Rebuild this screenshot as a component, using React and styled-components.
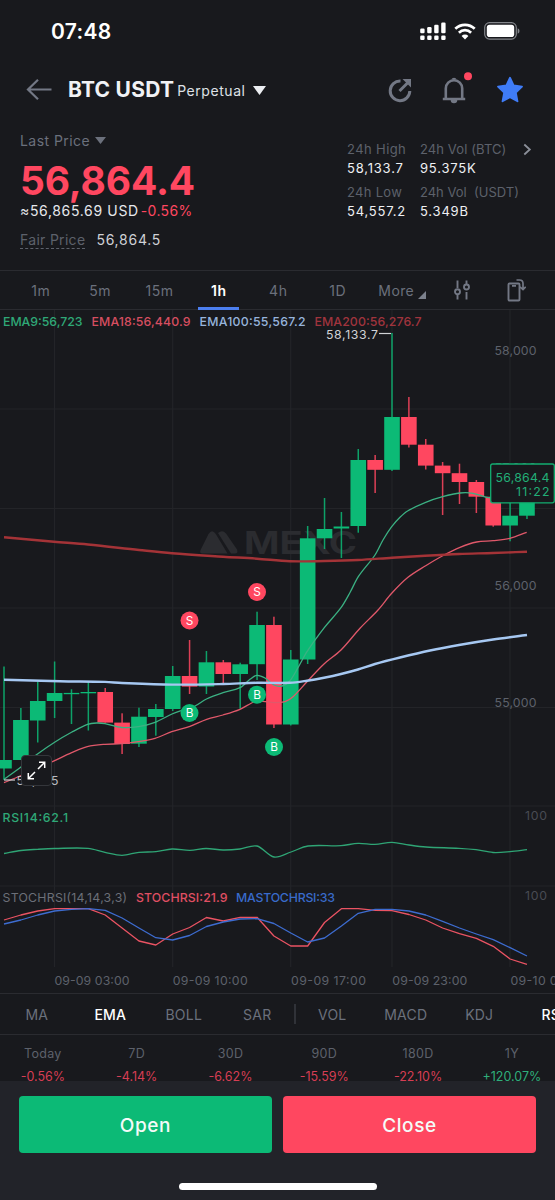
import React from "react";
import styled, { createGlobalStyle } from "styled-components";

const c = {
  bg: "#18191d",
  footer: "#222329",
  line: "#2a2b30",
  grid: "#232428",
  dim: "#5d616b",
  mid: "#6b707c",
  text: "#e6e8ec",
  green: "#0cba76",
  red: "#ff4760",
  softGreen: "#2fae7b",
  softRed: "#dd5062",
  blue: "#3f7cf7",
};

const GlobalStyle = createGlobalStyle`
  * { box-sizing: border-box; }
  body { margin: 0; background: ${c.bg}; overflow: hidden; }
`;

const Screen = styled.main`
  width: 555px;
  height: 1200px;
  display: flex;
  flex-direction: column;
  overflow: hidden;
  background: ${c.bg};
  color: ${c.text};
  font-family: Inter, "Liberation Sans", sans-serif;
  white-space: nowrap;
  svg { display: block; flex: none; }
`;

const StatusBar = styled.div`
  height: 62px;
  flex: none;
  padding: 0 35px 0 51px;
  display: flex;
  align-items: center;
  justify-content: space-between;
`;

const Clock = styled.span`
  font-size: 21px;
  font-weight: 600;
  letter-spacing: 0.3px;
  color: #fff;
`;

const StatusIcons = styled.div`
  display: flex;
  align-items: center;
  gap: 8px;
`;

const Header = styled.header`
  height: 56px;
  flex: none;
  padding: 0 31px 0 26px;
  display: flex;
  align-items: center;
`;

const Pair = styled.h1`
  margin: 0 3px 0 16px;
  font-size: 21px;
  line-height: 26px;
  font-weight: 700;
  letter-spacing: 0.25px;
  color: #f1f2f5;
`;

const Kind = styled.span`
  font-size: 14px;
  letter-spacing: 0.55px;
  color: #dfe1e6;
  margin-right: 7px;
`;

const HeaderActions = styled.div`
  margin-left: auto;
  display: flex;
  align-items: center;
  gap: 28px;
`;

const Summary = styled.section`
  height: 152px;
  flex: none;
  padding: 12px 0 0 20px;
  display: flex;
`;

const PriceBlock = styled.div`
  width: 327px;
`;

const PriceLabel = styled.div`
  display: flex;
  align-items: center;
  gap: 5px;
  height: 20px;
  font-size: 14px;
  letter-spacing: 0.45px;
  color: ${c.mid};
`;

const BigPrice = styled.div`
  height: 40px;
  margin-top: 11px;
  line-height: 40px;
  font-size: 39px;
  font-weight: 700;
  letter-spacing: -0.15px;
  color: ${c.red};
`;

const Converted = styled.div`
  height: 20px;
  line-height: 20px;
  font-size: 14px;
  letter-spacing: 0.65px;
  span { color: ${c.red}; margin-left: 2px; letter-spacing: 0.35px; }
`;

const Fair = styled.div`
  margin-top: 10px;
  display: flex;
  gap: 11px;
  line-height: 17px;
  font-size: 14px;
  letter-spacing: 0.75px;
  color: #cfd1d6;
`;

const FairLabel = styled.span`
  color: ${c.dim};
  letter-spacing: 0.3px;
  border-bottom: 1px dashed ${c.dim};
`;

const Stats = styled.div`
  display: grid;
  grid-template-columns: 73px 99px 14px;
  grid-template-rows: 43px 43px;
  padding-top: 10px;
`;

const Stat = styled.div`
  font-size: 13px;
  letter-spacing: ${(p) => p.$ls}px;
  line-height: 19px;
  color: ${c.dim};
  white-space: pre;
  strong { display: block; font-weight: 400; letter-spacing: 0.8px; color: #eef0f3; }
`;

const ChevronCell = styled.div`
  padding: 3px 0 0 4px;
`;

const Tabs = styled.nav`
  height: 40px;
  flex: none;
  border-top: 1px solid ${c.line};
  border-bottom: 1px solid ${c.line};
  padding-left: 10.5px;
  display: flex;
  align-items: stretch;
`;

const Tab = styled.div`
  width: 59.4px;
  display: flex;
  align-items: center;
  justify-content: center;
  position: relative;
  padding: 1px 0 0 1px;
  font-size: 14px;
  letter-spacing: 0.5px;
  font-weight: ${(p) => (p.$active ? 600 : 400)};
  color: ${(p) => (p.$active ? "#fff" : c.mid)};
  &::after {
    content: "";
    display: ${(p) => (p.$active ? "block" : "none")};
    position: absolute;
    left: 9px;
    right: 9px;
    bottom: -1px;
    height: 3px;
    background: #4c7ff0;
  }
`;

const MoreTab = styled.div`
  display: flex;
  align-items: center;
  gap: 4px;
  margin-left: 11.5px;
  padding-top: 1px;
  width: 75.5px;
  font-size: 14px;
  letter-spacing: 0.4px;
  color: ${c.mid};
  svg { margin-top: 9px; }
`;

const ToolButton = styled.div`
  width: ${(p) => p.$w}px;
  display: flex;
  align-items: center;
`;

const ChartArea = styled.section`
  position: relative;
  height: 683px;
  flex: none;
`;

const ExpandButton = styled.div`
  position: absolute;
  left: 20.5px;
  top: 445px;
  width: 31px;
  height: 31px;
  border: 1px solid #34363b;
  border-radius: 4px;
  background: ${c.bg};
  display: flex;
  align-items: center;
  justify-content: center;
`;

const Indicators = styled.nav`
  height: 42px;
  flex: none;
  border-top: 1px solid ${c.line};
  border-bottom: 1px solid ${c.line};
  display: flex;
  align-items: center;
`;

const Indicator = styled.div`
  width: 73.5px;
  flex: none;
  text-align: center;
  font-size: 14px;
  letter-spacing: 0.2px;
  font-weight: ${(p) => (p.$active ? 500 : 400)};
  color: ${(p) => (p.$active ? "#fff" : c.mid)};
`;

const Divider = styled.div`
  width: 1.5px;
  height: 20px;
  flex: none;
  background: #303238;
`;

const Performance = styled.section`
  height: 46px;
  flex: none;
  overflow: hidden;
  margin-left: -4px;
  display: grid;
  grid-template-columns: repeat(6, 93.8px);
  padding-top: 7px;
`;

const Period = styled.div`
  text-align: center;
  font-size: 12.5px;
  line-height: 23.4px;
  letter-spacing: 0.3px;
  color: ${c.dim};
  div { letter-spacing: 0; color: ${(p) => (p.$up ? c.softGreen : "#d63e54")}; }
`;

const Footer = styled.footer`
  flex: 1;
  background: ${c.footer};
  padding: 15px 19px 0;
  display: flex;
  flex-direction: column;
  align-items: center;
`;

const Actions = styled.div`
  width: 100%;
  display: flex;
  gap: 11px;
`;

const Action = styled.button`
  flex: 1;
  height: 57px;
  border: 0;
  border-radius: 4px;
  padding: 2px 0 0;
  font-family: inherit;
  font-size: 19px;
  font-weight: 500;
  letter-spacing: 0.6px;
  color: #f4fbf8;
  background: ${(p) => p.$bg};
`;

const HomeBar = styled.div`
  width: 198px;
  height: 7px;
  margin-top: 30px;
  border-radius: 4px;
  background: #fff;
`;

const chartTop = 310;
const step = 16.87;
const cx = (i) => 4 + step * i;

// [wick top, body top, body bottom, wick bottom, rising]
const candles = [
  [666.5, 760, 768.5, 780, 1], [708, 720, 760, 760, 1], [681.5, 701, 720.5, 742.5, 1],
  [661.5, 693, 701, 718, 1], [689.3, 692.9, 694.2, 724, 1], [681.5, 692, 693.3, 730.5, 1],
  [688, 692, 722.6, 722.6, 0], [713.3, 722.6, 744, 754, 0], [707.7, 716.7, 743.7, 747, 1],
  [704, 709, 717, 735.7, 1], [666, 676, 709, 711, 1], [640, 676, 686.6, 694, 0],
  [651, 662.3, 686.5, 694, 1], [660, 662.3, 674, 683.5, 0], [662.7, 664.3, 674, 708.7, 1],
  [611.7, 625, 664.2, 680, 1], [616.7, 625, 724.5, 728, 0], [650, 659.5, 724.5, 725.5, 1],
  [526, 538.3, 659.5, 664, 1], [498, 529, 538.3, 549, 1], [512, 526.5, 528.5, 558, 1],
  [449, 460, 526, 532.7, 1], [455, 460, 469.8, 493, 0], [333, 417, 469.8, 471, 1],
  [397, 417, 444.7, 447.5, 0], [439, 444.7, 465.6, 469.5, 0], [462, 465.6, 473.2, 515, 0],
  [463.7, 473.2, 482, 504, 0], [480, 482, 496.7, 513, 0], [496.7, 496.7, 525.5, 526.7, 0],
  [500, 515.7, 525.5, 541.3, 1], [480, 490, 515.7, 519, 1],
];

const ema9 = [[4, 779.3], [20, 767.7], [37.5, 754], [55, 742], [71.5, 732.3], [87.5, 724.3], [97, 723], [105, 723.7], [121.7, 727.5], [138.5, 726.7], [155, 722.3], [172, 714], [183, 710], [195, 706], [206.5, 699], [223, 692.7], [240, 687.7], [250, 679.3], [257, 675.3], [265, 678], [274, 685], [282, 686], [290, 680.7], [298, 667.7], [307, 651.7], [324.3, 627.7], [341, 607.7], [350, 592.5], [358.3, 576.7], [375, 555], [383, 540], [391.7, 526.7], [400, 517.3], [408, 510.7], [425.7, 502.3], [442.7, 496.7], [460, 493], [473, 493.3], [486.7, 497.3], [500, 499]];
const ema18 = [[4, 782.7], [20, 776], [53, 761.3], [71.7, 752.7], [87.3, 746.7], [105, 744.3], [121.7, 743.7], [138, 741.7], [155, 738.3], [171.7, 731.7], [190, 726.3], [206.7, 719.3], [223, 715], [240, 709.3], [255, 701.5], [263, 701.3], [274, 702.7], [285, 701.7], [293, 696.7], [307, 681.7], [324, 664], [341, 650], [360, 628.3], [378, 610], [391.7, 593.3], [408, 577.3], [425.7, 565.7], [442.7, 555.7], [460, 547.3], [476.7, 542], [493, 540.7], [510, 538.3], [526.7, 532.3]];
const ema100 = [[4, 679.7], [60, 681.2], [105, 681.9], [122, 683], [172, 684.6], [223, 684], [257, 682.8], [290, 682.8], [307, 680.7], [324, 677.7], [341, 674], [358, 669.5], [375, 664], [400, 657.5], [430, 650.5], [459, 645], [493, 639.5], [527, 635]];
const ema200 = [[4, 537.3], [54, 541.7], [88, 544.5], [139, 550], [172, 553.3], [223, 556.7], [257, 558.7], [290, 561.3], [324, 561], [358, 560], [392, 557.7], [425, 555.7], [459, 554], [493, 553], [527, 551.7]];
const rsi = [[4, 853.5], [21, 850.5], [37.6, 849.3], [54.5, 848.5], [88, 848.3], [105, 852.3], [122, 855.3], [139, 852.3], [156, 851.7], [172, 849], [190, 850.3], [206, 848.5], [223, 850], [240, 849], [257, 846], [274, 857], [291, 852], [308, 846], [341, 845.7], [358, 843.3], [375, 844.3], [392, 842.3], [409, 845], [426, 847], [459, 848.3], [476, 849.7], [493, 852.5], [510, 851.7], [527, 849.7]];
const stochY = [920, 915, 911, 908.7, 908.7, 908.7, 915, 928, 941, 945, 934, 927.5, 917.5, 921, 917.3, 917.3, 936, 946, 946, 922.5, 908.7, 908.7, 910.3, 910.7, 914.5, 920, 928, 933.7, 938.3, 946.3, 959, 964.3];
const maStochY = [924, 920, 915, 911, 909.3, 908.7, 910.3, 918, 928, 937.7, 940, 935.5, 926.5, 922, 919, 918.7, 923.5, 933, 942, 938, 926, 913.3, 909.3, 909.3, 911, 915, 921.3, 928, 934, 939.7, 947.7, 956];
const toPoints = (ys) => ys.map((y, i) => [cx(i), y]);

const straight = (pts) => "M" + pts.map((p) => p.join(" ")).join("L");

function smooth(pts) {
  let d = `M${pts[0][0]} ${pts[0][1]}`;
  for (let i = 0; i < pts.length - 1; i++) {
    const p0 = pts[i - 1] || pts[i];
    const p1 = pts[i];
    const p2 = pts[i + 1];
    const p3 = pts[i + 2] || p2;
    const w = p2[0] - p1[0];
    const m1 = (p2[1] - p0[1]) / (p2[0] - p0[0]);
    const m2 = (p3[1] - p1[1]) / (p3[0] - p1[0]);
    d += `C${p1[0] + w / 3} ${p1[1] + (m1 * w) / 3} ${p2[0] - w / 3} ${p2[1] - (m2 * w) / 3} ${p2[0]} ${p2[1]}`;
  }
  return d;
}

const gridX = [54.5, 172.7, 290.7, 392, 510];
const gridY = [409, 508.5, 608, 707.5, 806, 886];

const ChartLabel = ({ x, y, w, fill = c.dim, size = 12.3, children, ...rest }) => (
  <text x={x} y={y} textLength={w} fill={fill} fontSize={size} {...rest}>{children}</text>
);

const Marker = ({ x, y, side }) => (
  <g>
    <circle cx={x} cy={y} r="9" fill={side === "S" ? c.red : c.green} />
    <text x={x} y={y + 4.2} textAnchor="middle" fontSize="11.8" fill="#fff">{side}</text>
  </g>
);

const PriceChart = () => (
  <svg width="555" height="683" viewBox={`0 ${chartTop} 555 683`}>
    <g stroke={c.grid} strokeWidth="1.2">
      {gridX.map((x) => <path key={x} d={`M${x} 310V967`} />)}
      {gridY.map((y) => <path key={y} d={`M0 ${y}H555`} />)}
    </g>
    <g fill="#2b2c30">
      <path d="M202 553.5Q199 553 200.800 549.500L208.500 534Q212 528.500 215.800 534L227.500 553.500Z" />
      <path d="M218 533Q222.500 529.300 226 533.500L237 549.500Q238.500 553.300 235 553.500H231Z" />
      <text x="244" y="553.500" fontSize="31" fontWeight="700" textLength="113" lengthAdjust="spacingAndGlyphs">MEXC</text>
    </g>
    {[["58,000", 354.6], ["57,000", 472], ["56,000", 589.5], ["55,000", 707]].map(([t, y]) => (
      <ChartLabel key={t} x={494.5} y={y} w={42}>{t}</ChartLabel>
    ))}
    <g>
      {candles.map(([wt, t, b, wb, up], i) => (
        <g key={i} fill={up ? c.green : c.red}>
          <rect x={cx(i) - 0.75} y={wt} width="1.5" height={wb - wt} fillOpacity="0.85" />
          <rect x={cx(i) - 7.8} y={t} width="15.6" height={b - t} />
        </g>
      ))}
    </g>
    <g fill="none" strokeLinejoin="round">
      <path d={smooth(ema9)} stroke="#3bb183" strokeWidth="1.3" />
      <path d={smooth(ema18)} stroke="#e0586a" strokeWidth="1.3" />
      <path d={smooth(ema100)} stroke="#a6c8f2" strokeWidth="2.4" />
      <path d={smooth(ema200)} stroke="#a43337" strokeWidth="2.4" />
      <path d={smooth(rsi)} stroke="#2fa575" strokeWidth="1.3" />
      <path d={straight(toPoints(stochY))} stroke="#ea5363" strokeWidth="1.3" />
      <path d={straight(toPoints(maStochY))} stroke="#3d6cd0" strokeWidth="1.3" />
    </g>
    <Marker x={189.5} y={620.5} side="S" />
    <Marker x={257} y={592} side="S" />
    <Marker x={189.5} y={713} side="B" />
    <Marker x={257} y={694.7} side="B" />
    <Marker x={274} y={747} side="B" />

    <g fontWeight="500">
      <ChartLabel x={3} y={325.5} w={79.5} fill="#2fa877">EMA9:56,723</ChartLabel>
      <ChartLabel x={91.5} y={325.5} w={99} fill="#d64e60">EMA18:56,440.9</ChartLabel>
      <ChartLabel x={199.5} y={325.5} w={106} fill="#96b4dc">EMA100:55,567.2</ChartLabel>
      <ChartLabel x={314.5} y={325.5} w={107} fill="#a0343d">EMA200:56,276.7</ChartLabel>
      <ChartLabel x={2.5} y={821.8} w={65.5} fill="#2fa877">RSI14:62.1</ChartLabel>
      <ChartLabel x={136} y={902} w={91.5} fill="#e04f63">STOCHRSI:21.9</ChartLabel>
      <ChartLabel x={236} y={902} w={99} fill="#396bcb">MASTOCHRSI:33</ChartLabel>
    </g>
    <ChartLabel x={326} y={338.8} w={52} fill="#d0d2d6">58,133.7</ChartLabel>
    <path d="M379 333.500H391" stroke="#d0d2d6" strokeWidth="1.2" />
    <path d="M4 780H15" stroke="#d0d2d6" strokeWidth="1.2" />
    <ChartLabel x={16.5} y={785} w={42} fill="#b9bbc0">54,555</ChartLabel>

    <rect x="490.700" y="464" width="63.600" height="38.800" rx="2" fill={c.bg} stroke="#12ad70" strokeWidth="1.3" />
    <ChartLabel x={495.5} y={481.5} w={54} fill="#22ae77">56,864.4</ChartLabel>
    <ChartLabel x={516} y={496} w={33.5} fill="#22ae77">11:22</ChartLabel>

    <ChartLabel x={525} y={819.5} w={22} fill="#484b53">100</ChartLabel>
    <ChartLabel x={525} y={899.8} w={22} fill="#484b53">100</ChartLabel>
    <ChartLabel x={2.5} y={902} w={124.5} fill="#6b6f78">STOCHRSI(14,14,3,3)</ChartLabel>
    {[[54.5, "03"], [172.7, "10"], [291, "17"], [392.3, "23"], [510.5, "05"]].map(([x, h], i) => (
      <ChartLabel key={x} x={x} y={984.7} w={75}>{`${i === 4 ? "09-10" : "09-09"} ${h}:00`}</ChartLabel>
    ))}
  </svg>
);

const SignalIcon = () => (
  <svg width="26" height="19" viewBox="0 0 26 19" fill="#fff">
    {[[0, 6.5], [7, 5], [14, 2.8], [21, 0.5]].map(([x, y]) => (
      <g key={x}>
        <rect x={x + 0.2} y={y} width="4.4" height={11.3 - y} rx="1.2" />
        <rect x={x + 0.2} y="13.5" width="4.4" height="4.6" rx="1.3" />
      </g>
    ))}
  </svg>
);

const WifiIcon = () => (
  <svg width="22" height="17" viewBox="0 0 22 17">
    <g fill="none" stroke="#fff" strokeWidth="2.7">
      <path d="M1.300 5.800a13.800 13.800 0 0 1 19.400 0" />
      <path d="M4.900 9.700a8.700 8.700 0 0 1 12.200 0" />
    </g>
    <path d="M11 16.400 7.600 12.900a4.800 4.800 0 0 1 6.800 0Z" fill="#fff" />
  </svg>
);

const BatteryIcon = () => (
  <svg width="36" height="18" viewBox="0 0 36 18">
    <rect x="0.700" y="0.700" width="31.600" height="16.400" rx="4.800" fill="none" stroke="#83858a" strokeWidth="1.2" />
    <rect x="2.800" y="2.800" width="27.400" height="12.200" rx="2.800" fill="#fff" />
    <path d="M33.700 6.300q1.800 0.600 1.800 2.700t-1.800 2.700z" fill="#83858a" />
  </svg>
);

const BackIcon = () => (
  <svg width="26" height="22" viewBox="0 0 26 22" fill="none" stroke="#737885" strokeWidth="2.2">
    <path d="M25.500 10.500H1.800M12 0.800 2 10.500 12 20.200" />
  </svg>
);

const ShareIcon = () => (
  <svg width="26" height="26" viewBox="0 0 26 26" fill="none" stroke="#737885" strokeWidth="3">
    <path d="M13.500 4.100a9.800 9.800 0 1 0 9.300 9.900" />
    <path d="M12.500 14 21 5.500" />
    <path d="M15.500 2H24V10.500Z" fill="#737885" stroke="none" />
  </svg>
);

const BellIcon = () => (
  <svg width="27" height="36" viewBox="0 0 27 36" overflow="visible">
    <g fill="none" stroke="#737885" strokeWidth="2.6">
      <path d="M4.800 26V16.500a8.200 8.200 0 0 1 16.400 0V26M1.800 27H24.200" />
    </g>
    <path d="M10.300 7.600a2.900 2.900 0 0 1 5.400 0ZM9.700 28h6.600a3.300 3.300 0 0 1-6.600 0Z" fill="#737885" />
    <circle cx="27" cy="4.300" r="4" fill={c.red} />
  </svg>
);

const StarIcon = () => (
  <svg width="28" height="28" viewBox="0 0 28 28">
    <path d="M14 1.700 17.600 9.400 26 10.600 19.800 16.500 21.500 25.300 14 21.100 6.500 25.300 8.200 16.500 2 10.600 10.400 9.400Z" fill={c.blue} stroke={c.blue} strokeWidth="1.8" strokeLinejoin="round" />
  </svg>
);

const Caret = ({ w, h, fill }) => (
  <svg width={w} height={h} viewBox="0 0 12 9" preserveAspectRatio="none">
    <path d="M0 0H12L6 9Z" fill={fill} />
  </svg>
);

const ChevronIcon = () => (
  <svg width="9" height="13" viewBox="0 0 9 13" fill="none" stroke="#8b8f99" strokeWidth="1.8">
    <path d="M1.300 1.500 6.800 6.500 1.300 11.500" />
  </svg>
);

const SettingsIcon = () => (
  <svg width="16" height="20" viewBox="0 0 16 20" fill="none" stroke="#737885" strokeWidth="1.9">
    <path d="M3.500 0.500V8M3.500 14.500V19.500M12.500 0.500V4M12.500 12V19.500" />
    <circle cx="3.500" cy="11.800" r="2.500" />
    <circle cx="12.500" cy="7" r="2.500" />
  </svg>
);

const RotateIcon = () => (
  <svg width="19" height="23" viewBox="0 0 19 23" fill="none" stroke="#737885" strokeWidth="1.9">
    <rect x="1.500" y="4.500" width="11" height="17" rx="1" />
    <path d="M5 6.800H9M9.500 1H12.500Q16 1 16 4.500V10M13 7.800 16 10.600 18.700 7.800" strokeWidth="1.7" />
  </svg>
);

const ExpandIcon = () => (
  <svg width="19" height="19" viewBox="0 0 19 19" fill="none" stroke="#fff" strokeWidth="1.5">
    <path d="M11 8 17.500 1.500M12 1.300H17.700V7M8 11 1.500 17.500M1.300 12V17.700H7" />
  </svg>
);

const periods = [["Today", "-0.56%"], ["7D", "-4.14%"], ["30D", "-6.62%"], ["90D", "-15.59%"], ["180D", "-22.10%"], ["1Y", "+120.07%"]];

export default function App() {
  return (
    <Screen>
      <GlobalStyle />
      <StatusBar>
        <Clock>07:48</Clock>
        <StatusIcons><SignalIcon /><WifiIcon /><BatteryIcon /></StatusIcons>
      </StatusBar>
      <Header>
        <BackIcon />
        <Pair>BTC USDT</Pair>
        <Kind>Perpetual</Kind>
        <Caret w={13} h={9} fill="#eceef2" />
        <HeaderActions><ShareIcon /><BellIcon /><StarIcon /></HeaderActions>
      </Header>
      <Summary>
        <PriceBlock>
          <PriceLabel>Last Price <Caret w={11} h={7} fill={c.mid} /></PriceLabel>
          <BigPrice>56,864.4</BigPrice>
          <Converted>≈56,865.69 USD<span>-0.56%</span></Converted>
          <Fair><FairLabel>Fair Price</FairLabel>56,864.5</Fair>
        </PriceBlock>
        <Stats>
          <Stat $ls={0.4}>24h High<strong>58,133.7</strong></Stat>
          <Stat $ls={0.1}>24h Vol (BTC)<strong>95.375K</strong></Stat>
          <ChevronCell><ChevronIcon /></ChevronCell>
          <Stat $ls={0.3}>24h Low<strong>54,557.2</strong></Stat>
          <Stat $ls={0}>24h Vol  (USDT)<strong>5.349B</strong></Stat>
        </Stats>
      </Summary>
      <Tabs>
        {["1m", "5m", "15m", "1h", "4h", "1D"].map((t) => <Tab key={t} $active={t === "1h"}>{t}</Tab>)}
        <MoreTab>More<svg width="8" height="8" viewBox="0 0 8 8"><path d="M8 0V8H0Z" fill="#7b808c" /></svg></MoreTab>
        <ToolButton $w={53}><SettingsIcon /></ToolButton>
        <ToolButton $w={20}><RotateIcon /></ToolButton>
      </Tabs>
      <ChartArea>
        <PriceChart />
        <ExpandButton><ExpandIcon /></ExpandButton>
      </ChartArea>
      <Indicators>
        {["MA", "EMA", "BOLL", "SAR"].map((t) => <Indicator key={t} $active={t === "EMA"}>{t}</Indicator>)}
        <Divider />
        {["VOL", "MACD", "KDJ", "RSI"].map((t) => <Indicator key={t} $active={t === "RSI"}>{t}</Indicator>)}
      </Indicators>
      <Performance>
        {periods.map(([label, value]) => (
          <Period key={label} $up={value[0] === "+"}>{label}<div>{value}</div></Period>
        ))}
      </Performance>
      <Footer>
        <Actions>
          <Action $bg={c.green}>Open</Action>
          <Action $bg={c.red}>Close</Action>
        </Actions>
        <HomeBar />
      </Footer>
    </Screen>
  );
}
